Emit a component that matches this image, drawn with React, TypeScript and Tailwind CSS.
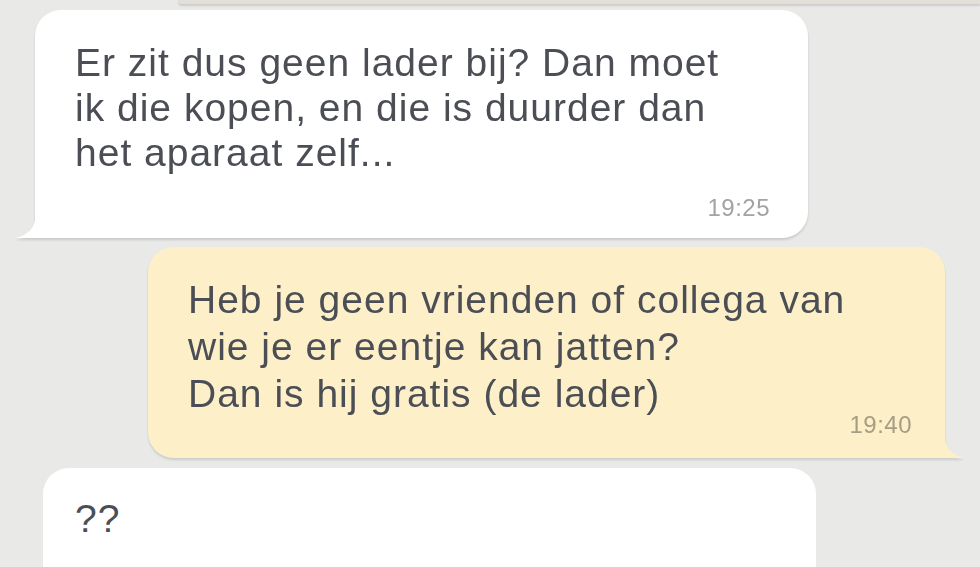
import React from "react";

function TailLeft({ color }: { color: string }) {
  return (
    <svg className="absolute bottom-0 -left-[20px]" width="21" height="26" viewBox="0 0 21 26">
      <path d="M21 0 Q21 22 0 26 L21 26 Z" fill={color} />
    </svg>
  );
}

function TailRight({ color }: { color: string }) {
  return (
    <svg className="absolute bottom-0 -right-[20px]" width="21" height="26" viewBox="0 0 21 26">
      <path d="M0 0 Q0 22 21 26 L0 26 Z" fill={color} />
    </svg>
  );
}

export default function App() {
  return (
    <div className="h-[567px] w-[980px] overflow-hidden bg-[#e9e9e8] font-['Liberation_Sans',Arial,sans-serif] text-[39px] tracking-[1px] text-[#4b4e54]">
      {/* rest of previous bubble */}
      <div className="ml-[178px] h-[4px] rounded-bl-[18px] bg-[#e2ded8] shadow-[0_2px_2px_rgba(0,0,0,0.12)]" />

      {/* incoming message */}
      <div className="mt-[6px] ml-[35px] w-[773px] drop-shadow-[0_2px_1px_rgba(0,0,0,0.13)]">
        <div className="relative rounded-[26px] rounded-bl-none bg-white pt-[30px] pr-[38px] pb-[16px] pl-[40px]">
          <p className="leading-[45px]">
            Er zit dus geen lader bij? Dan moet
            <br />
            ik die kopen, en die is duurder dan
            <br />
            het aparaat zelf...
          </p>
          <div className="mt-[19px] text-right text-[24px] leading-[28px] tracking-[0.5px] text-[#a3a3a3]">19:25</div>
          <TailLeft color="#ffffff" />
        </div>
      </div>

      {/* outgoing message */}
      <div className="mt-[9px] ml-[148px] w-[797px] drop-shadow-[0_2px_1px_rgba(0,0,0,0.12)]">
        <div className="relative rounded-[26px] rounded-br-none bg-[#fdefc7] pt-[29px] pr-[33px] pb-[19px] pl-[40px]">
          <p className="leading-[47px]">
            Heb je geen vrienden of collega van
            <br />
            wie je er eentje kan jatten?
            <br />
            Dan is hij gratis (de lader)
          </p>
          <div className="-mt-[6px] text-right text-[24px] leading-[28px] tracking-[0.5px] text-[#a59e85]">19:40</div>
          <TailRight color="#fdefc7" />
        </div>
      </div>

      {/* incoming message */}
      <div className="mt-[10px] ml-[43px] w-[773px]">
        <div className="h-[140px] rounded-t-[26px] bg-white pt-[28px] pl-[32px]">
          <p className="leading-[45px]">??</p>
        </div>
      </div>
    </div>
  );
}
